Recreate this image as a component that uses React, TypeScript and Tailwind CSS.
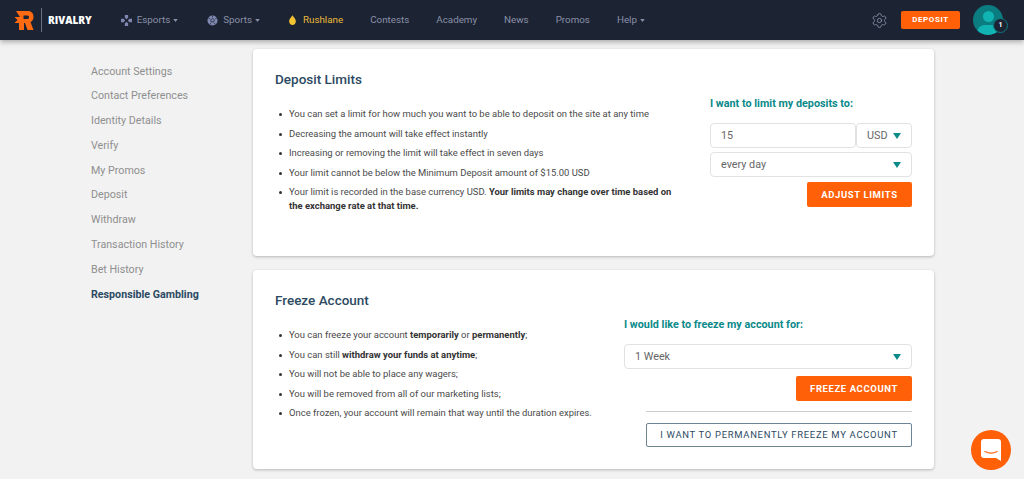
import { Settings } from 'lucide-react';

const SIDE_LINKS = [
  'Account Settings',
  'Contact Preferences',
  'Identity Details',
  'Verify',
  'My Promos',
  'Deposit',
  'Withdraw',
  'Transaction History',
  'Bet History',
];

function Caret() {
  return (
    <svg viewBox="0 0 8 6" className="h-[6px] w-[8px] fill-[#0b8a8a]">
      <path d="M0 0h8L4 6z" />
    </svg>
  );
}

function NavCaret() {
  return (
    <svg viewBox="0 0 6 4" className="ml-[3px] h-[3px] w-[5px] fill-[#8a90a8]">
      <path d="M0 0h6L3 4z" />
    </svg>
  );
}

function NavItem({ label, icon, caret, className }: { label: string; icon?: React.ReactNode; caret?: boolean; className: string }) {
  return (
    <div className={`flex items-center ${className}`}>
      {icon}
      <span>{label}</span>
      {caret && <NavCaret />}
    </div>
  );
}

function Header() {
  return (
    <header className="relative z-10 flex h-10 items-center bg-[#1c2333] pl-[14px] text-[9.8px] text-[#8a90a8] shadow-[0_2px_5px_rgba(0,0,0,0.3)]">
      <svg viewBox="0 0 20 19" className="h-[19px] w-[20px] fill-[#ff6a13]" fillRule="evenodd">
        <path d="M2 0H14C17.500 0 19.500 2.500 19.500 6C19.500 8.500 18.500 10 16.500 11L19.500 19H13.500L11 12H10V19H5V12H.5L3.500 9L.5 6H6zM9.500 4.500V8H13.500C15.500 8 15.500 4.500 13.500 4.500z" />
      </svg>
      <div className="ml-[7px] h-6 w-px bg-[#6b7080]" />
      <span className="ml-[6px] font-['Open_Sans',sans-serif] text-[10px] font-extrabold text-white">RIVALRY</span>
      <NavItem
        className="ml-[29px]"
        label="Esports"
        caret
        icon={
          <svg viewBox="0 0 12 12" className="mr-[5px] h-[11px] w-[11px] fill-[#7f88b0]">
            <path d="M4.200 0h3.600v3L6 4.500 4.200 3zM0 4.200h3L4.500 6 3 7.800H0zM12 4.200H9L7.500 6 9 7.800h3zM4.200 12h3.600V9L6 7.500 4.200 9z" />
          </svg>
        }
      />
      <NavItem
        className="ml-[29px]"
        label="Sports"
        caret
        icon={
          <svg viewBox="0 0 12 12" className="mr-[5px] h-[11px] w-[11px]">
            <circle cx="6" cy="6" r="5.500" fill="#7f88b0" />
            <path d="M6 3.800 8 5.200 7.300 7.500H4.700L4 5.200zM1.500 3.500 3 4M10.500 3.500 9 4M6 1v1.500M3 10l1.500-1.500M9 10 7.500 8.500" stroke="#1c2333" strokeWidth=".8" fill="none" />
          </svg>
        }
      />
      <NavItem
        className="ml-[29px] text-[#e8b93a]"
        label="Rushlane"
        icon={
          <svg viewBox="0 0 8 12" className="mr-[7px] h-[10px] w-[7px] fill-[#f2c230]">
            <path d="M4 0c.5 2 4 4 4 7.500C8 10.200 6.200 12 4 12S0 10.200 0 7.500C0 4 3.500 2 4 0z" />
          </svg>
        }
      />
      <NavItem className="ml-[27px]" label="Contests" />
      <NavItem className="ml-[27px]" label="Academy" />
      <NavItem className="ml-[27px]" label="News" />
      <NavItem className="ml-[27px]" label="Promos" />
      <NavItem className="ml-[27px]" label="Help" caret />
      <Settings className="ml-auto h-[17px] w-[17px] text-[#8a90a8]" strokeWidth={1.25} />
      <button className="ml-[13px] flex h-[18px] w-[59px] items-center justify-center rounded-[2px] bg-[#ff6008] text-[8px] font-bold tracking-[0.6px] text-white">
        DEPOSIT
      </button>
      <div className="relative ml-[13px] mr-[21px] h-[30px] w-[30px] overflow-hidden rounded-full bg-[#0b7c80]">
        <div className="absolute left-[10px] top-[6px] h-[11px] w-[11px] rounded-full bg-[#11b3b3]" />
        <div className="absolute left-[4px] top-[20px] h-[16px] w-[22px] rounded-full bg-[#11b3b3]" />
      </div>
      <div className="absolute right-[16px] top-[18px] flex h-[15px] w-[15px] items-center justify-center rounded-full border border-[#0b7c80] bg-[#1c2333] text-[7px] font-bold text-white">
        1
      </div>
    </header>
  );
}

function Sidebar() {
  return (
    <nav className="flex w-[253px] shrink-0 flex-col gap-[7.8px] pl-[91px] pt-[22.5px] text-[10.7px] leading-[17px] text-[#8f8f8f]">
      {SIDE_LINKS.map((l) => (
        <a key={l}>{l}</a>
      ))}
      <a className="font-bold text-[#2c4a63]">Responsible Gambling</a>
    </nav>
  );
}

function Li({ children }: { children: React.ReactNode }) {
  return (
    <li className="flex gap-[7px] pl-[4px]">
      <span className="mt-[6px] h-[3px] w-[3px] shrink-0 rounded-full bg-[#333]" />
      <span>{children}</span>
    </li>
  );
}

function Select({ label, className = '' }: { label: string; className?: string }) {
  return (
    <div className={`flex h-[25px] items-center justify-between rounded-[4px] border border-[#e2e2e2] bg-white pl-[10px] pr-[10px] text-[10.8px] text-[#666] ${className}`}>
      <span className="pt-px">{label}</span>
      <Caret />
    </div>
  );
}

function OrangeButton({ label, className }: { label: string; className: string }) {
  return (
    <button className={`flex h-[25px] items-center justify-center self-end rounded-[2px] bg-[#ff6008] pt-px text-[9.5px] font-bold tracking-[0.6px] text-white ${className}`}>
      {label}
    </button>
  );
}

export default function App() {
  return (
    <div className="relative h-[479px] w-[1024px] overflow-hidden bg-[#f2f2f2] font-['Roboto',sans-serif]">
      <Header />
      <div className="flex">
        <Sidebar />
        <main className="flex w-[681px] flex-col gap-[14px] pt-[9px]">
          <section className="flex h-[207px] rounded-[4px] bg-white px-[22px] shadow-[0_1px_3px_rgba(0,0,0,0.25)]">
            <div className="w-[400px] shrink-0 pt-[21px]">
              <h2 className="text-[13.5px] font-medium leading-[18px] text-[#2c4a63]">Deposit Limits</h2>
              <ul className="mt-[19px] flex flex-col gap-[5.5px] text-[9.45px] leading-[14px] text-[#4a4a4a]">
                <Li>You can set a limit for how much you want to be able to deposit on the site at any time</Li>
                <Li>Decreasing the amount will take effect instantly</Li>
                <Li>Increasing or removing the limit will take effect in seven days</Li>
                <Li>Your limit cannot be below the Minimum Deposit amount of $15.00 USD</Li>
                <Li>
                  Your limit is recorded in the base currency USD. <b className="text-[#333]">Your limits may change over time based on the exchange rate at that time.</b>
                </Li>
              </ul>
            </div>
            <div className="ml-auto flex w-[202px] flex-col pt-[48px]">
              <p className="text-[10.8px] font-bold leading-[14px] text-[#0b8a8a]">I want to limit my deposits to:</p>
              <div className="mt-[12px] flex">
                <div className="flex h-[25px] w-[146px] items-center rounded-[4px] border border-[#e2e2e2] pl-[10px] pt-px text-[10.8px] text-[#666]">15</div>
                <Select label="USD" className="w-[56px]" />
              </div>
              <Select label="every day" className="mt-[4px]" />
              <OrangeButton label="ADJUST LIMITS" className="mt-[5px] w-[105px]" />
            </div>
          </section>
          <section className="flex h-[199px] rounded-[4px] bg-white px-[22px] shadow-[0_1px_3px_rgba(0,0,0,0.25)]">
            <div className="w-[330px] shrink-0 pt-[21px]">
              <h2 className="text-[13.5px] font-medium leading-[18px] text-[#2c4a63]">Freeze Account</h2>
              <ul className="mt-[19px] flex flex-col gap-[5.5px] text-[9.45px] leading-[14px] text-[#4a4a4a]">
                <Li>You can freeze your account <b className="text-[#333]">temporarily</b> or <b className="text-[#333]">permanently</b>;</Li>
                <Li>You can still <b className="text-[#333]">withdraw your funds at anytime</b>;</Li>
                <Li>You will not be able to place any wagers;</Li>
                <Li>You will be removed from all of our marketing lists;</Li>
                <Li>Once frozen, your account will remain that way until the duration expires.</Li>
              </ul>
            </div>
            <div className="ml-auto flex w-[288px] flex-col pt-[48px]">
              <p className="text-[10.8px] font-bold leading-[14px] text-[#0b8a8a]">I would like to freeze my account for:</p>
              <Select label="1 Week" className="mt-[12px]" />
              <OrangeButton label="FREEZE ACCOUNT" className="mt-[7px] w-[116px]" />
              <div className="ml-[22px] mt-[10px] h-px bg-[#ccc]" />
              <button className="ml-[22px] mt-[11px] flex h-[24px] items-center justify-center rounded-[2px] border border-[#6b8596] pt-px text-[9.45px] tracking-[0.7px] text-[#2c4a63]">
                I WANT TO PERMANENTLY FREEZE MY ACCOUNT
              </button>
            </div>
          </section>
        </main>
      </div>
      <div className="absolute left-[971px] top-[430px] flex h-[40px] w-[40px] items-center justify-center rounded-full bg-[#ff6008]">
        <svg viewBox="0 0 20 22" className="h-[22px] w-[20px]">
          <path d="M3 0h14a3 3 0 0 1 3 3v19l-5-3H3a3 3 0 0 1-3-3V3a3 3 0 0 1 3-3z" fill="#fff" />
          <path d="M4 12.500c3.500 2 8.500 2 12 0" stroke="#ff6008" strokeWidth="1.200" fill="none" strokeLinecap="round" />
        </svg>
      </div>
    </div>
  );
}
